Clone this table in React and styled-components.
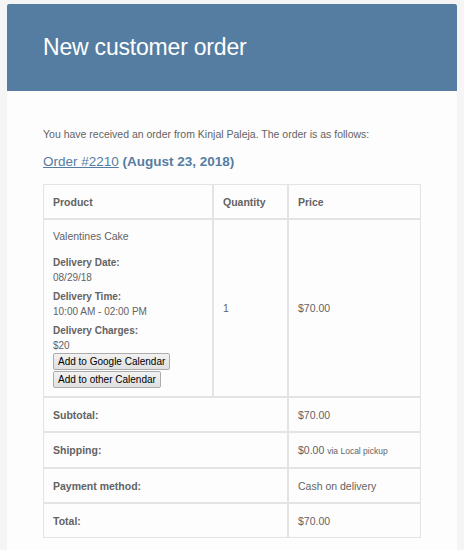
//NEW ORDER EMAIL

//IMPORTING
import React from 'react';
import styled, { createGlobalStyle } from 'styled-components';

//GLOBAL
const GlobalStyle = createGlobalStyle`
	html, body {
		margin: 0;
		padding: 0;
		background-color: #f5f5f5;
	}
	body {
		font-family: "Liberation Sans", Arial, sans-serif;
	}
`
//WRAPPER
const Wrapper = styled.div`
	width: 464px;
	height: 550px;
	padding: 4px 7px 0;
	box-sizing: border-box;
	overflow: hidden;
`
//CARD
const Card = styled.div`
	background-color: #fdfdfd;
	border-radius: 2px 2px 0 0;
	height: 100%;
`
//HEADER
const Header = styled.div`
	background-color: #557da1;
	height: 87px;
	padding: 0 36px;
	display: flex;
	align-items: center;
	border-radius: 2px 2px 0 0;
`
const Title = styled.h1`
	margin: 0;
	color: #ffffff;
	font-size: 23px;
	font-weight: normal;
	letter-spacing: -0.2px;
`
//BODY
const Body = styled.div`
	padding: 37px 36px 0;
	color: #636363;
`
const Intro = styled.p`
	margin: 0 0 12px;
	font-size: 10.5px;
	line-height: 13px;
`
const OrderHeading = styled.h2`
	margin: 0 0 14px;
	font-size: 13.5px;
	line-height: 17px;
	font-weight: bold;
	color: #557da1;
	a {
		font-weight: normal;
		color: #557da1;
		text-decoration: underline;
	}
`
//TABLE
const Table = styled.table`
	width: 378px;
	border-collapse: separate;
	border-spacing: 0;
	font-size: 10.5px;
	color: #636363;
`
const Cell = styled.td`
	border: 1px solid #e4e4e4;
	padding: ${props => props.top ? '10px 9px 7px' : '0 9px'};
	height: ${props => props.h ? props.h + 'px' : 'auto'};
	text-align: left;
	vertical-align: ${props => props.top ? 'top' : 'middle'};
	font-weight: ${props => props.bold ? 'bold' : 'normal'};
	box-sizing: border-box;
`
const HeadCell = styled(Cell).attrs({ as: 'th' })`
	font-weight: bold;
`
//PRODUCT DETAILS
const ProductName = styled.div`
	font-size: 10.5px;
	line-height: 13px;
	margin: 0 0 12px;
`
const Meta = styled.div`
	font-size: 10px;
	line-height: 15px;
	margin-bottom: 4px;
	strong {
		display: block;
	}
`
const Charges = styled(Meta)`
	margin-bottom: 0;
`
const CalButton = styled.button`
	display: block;
	font-family: "Liberation Sans", Arial, sans-serif;
	font-size: 10px;
	color: #000000;
	background: linear-gradient(#f2f2f2, #e0e0e0);
	border: 1px solid #acacac;
	border-radius: 2px;
	padding: 0 4px;
	height: 17px;
	line-height: 15px;
	margin: 0 0 1px;
`
const Small = styled.small`
	font-size: 8.5px;
`

//APP
const App = () => {
	return (
		<Wrapper>
			<GlobalStyle />
			<Card>
				<Header>
					<Title>New customer order</Title>
				</Header>
				<Body>
					<Intro>You have received an order from Kinjal Paleja. The order is as follows:</Intro>
					<OrderHeading><a href='#'>Order #2210</a> (August 23, 2018)</OrderHeading>
					<Table>
						<colgroup>
							<col style={{ width: 170 }} />
							<col style={{ width: 75 }} />
							<col style={{ width: 133 }} />
						</colgroup>
						<thead>
							<tr>
								<HeadCell h={35}>Product</HeadCell>
								<HeadCell h={35}>Quantity</HeadCell>
								<HeadCell h={35}>Price</HeadCell>
							</tr>
						</thead>
						<tbody>
							<tr>
								<Cell top>
									<ProductName>Valentines Cake</ProductName>
									<Meta><strong>Delivery Date:</strong>08/29/18</Meta>
									<Meta><strong>Delivery Time:</strong>10:00 AM - 02:00 PM</Meta>
									<Charges><strong>Delivery Charges:</strong>$20</Charges>
									<CalButton>Add to Google Calendar</CalButton>
									<CalButton>Add to other Calendar</CalButton>
								</Cell>
								<Cell>1</Cell>
								<Cell>$70.00</Cell>
							</tr>
						</tbody>
						<tfoot>
							<tr>
								<Cell bold colSpan={2} h={35}>Subtotal:</Cell>
								<Cell h={35}>$70.00</Cell>
							</tr>
							<tr>
								<Cell bold colSpan={2} h={36}>Shipping:</Cell>
								<Cell h={36}>$0.00 <Small>via Local pickup</Small></Cell>
							</tr>
							<tr>
								<Cell bold colSpan={2} h={35}>Payment method:</Cell>
								<Cell h={35}>Cash on delivery</Cell>
							</tr>
							<tr>
								<Cell bold colSpan={2} h={35}>Total:</Cell>
								<Cell h={35}>$70.00</Cell>
							</tr>
						</tfoot>
					</Table>
				</Body>
			</Card>
		</Wrapper>
	)
}

export default App;
